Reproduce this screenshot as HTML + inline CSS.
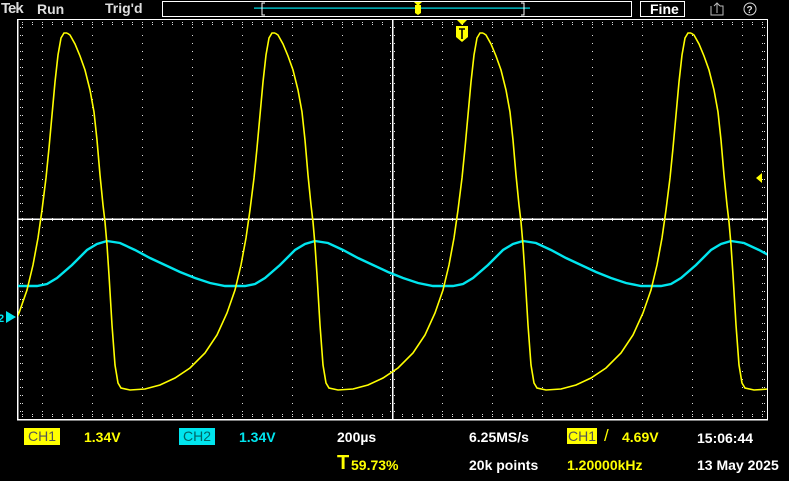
<!DOCTYPE html>
<html><head><meta charset="utf-8"><style>
html,body{margin:0;padding:0;background:#000;width:789px;height:481px;overflow:hidden}
body{position:relative;font-family:"Liberation Sans",sans-serif;font-weight:bold;font-size:13px}
.t{position:absolute;white-space:nowrap}
.w{color:#fff}.y{color:#ffff00}.c{color:#00e5ee}
</style></head><body>
<svg width="789" height="481" style="position:absolute;left:0;top:0">
<defs>
<pattern id="hrow" x="2" y="0" width="10" height="2" patternUnits="userSpaceOnUse"><rect x="0" y="0" width="1" height="1" fill="#ddd"/></pattern>
<pattern id="vcol" x="0" y="3" width="2" height="8" patternUnits="userSpaceOnUse"><rect x="0" y="0" width="1" height="1" fill="#ddd"/></pattern>
<clipPath id="gc"><rect x="18" y="20" width="749" height="399"/></clipPath>
<path id="yp" fill="none" stroke="#ffff00" stroke-width="1.6" d="M0,33 L3,35 8,44 13,56 18,70 23,90 27,112 30,140 33,175 36,205 38,222 40,245 42,275 45,325 48,365 51,383 54,388 63,390 78,389 93,385 108,378 123,368 138,353 150,335 160,313 168,290 174,265 179,238 183,210 187,178 190,148 193,115 196,82 199,55 202,38 205,33 208,33"/>
<path id="bp" fill="none" stroke="#00e5ee" stroke-width="2.4" d="M0,241 L13,243 28,250 43,258 58,265 73,272 88,278 103,283 118,286 138,286 148,284 158,278 173,265 188,250 198,244 208,241"/>
</defs>
<g id="grid">
<rect x="18" y="59" width="749" height="1" fill="url(#hrow)"/>
<rect x="18" y="99" width="749" height="1" fill="url(#hrow)"/>
<rect x="18" y="139" width="749" height="1" fill="url(#hrow)"/>
<rect x="18" y="179" width="749" height="1" fill="url(#hrow)"/>
<rect x="18" y="259" width="749" height="1" fill="url(#hrow)"/>
<rect x="18" y="299" width="749" height="1" fill="url(#hrow)"/>
<rect x="18" y="339" width="749" height="1" fill="url(#hrow)"/>
<rect x="18" y="379" width="749" height="1" fill="url(#hrow)"/>
<rect x="42" y="20" width="1" height="399" fill="url(#vcol)"/>
<rect x="92" y="20" width="1" height="399" fill="url(#vcol)"/>
<rect x="142" y="20" width="1" height="399" fill="url(#vcol)"/>
<rect x="192" y="20" width="1" height="399" fill="url(#vcol)"/>
<rect x="242" y="20" width="1" height="399" fill="url(#vcol)"/>
<rect x="292" y="20" width="1" height="399" fill="url(#vcol)"/>
<rect x="342" y="20" width="1" height="399" fill="url(#vcol)"/>
<rect x="442" y="20" width="1" height="399" fill="url(#vcol)"/>
<rect x="492" y="20" width="1" height="399" fill="url(#vcol)"/>
<rect x="542" y="20" width="1" height="399" fill="url(#vcol)"/>
<rect x="592" y="20" width="1" height="399" fill="url(#vcol)"/>
<rect x="642" y="20" width="1" height="399" fill="url(#vcol)"/>
<rect x="692" y="20" width="1" height="399" fill="url(#vcol)"/>
<rect x="742" y="20" width="1" height="399" fill="url(#vcol)"/>
<rect x="20" y="20" width="3" height="399" fill="url(#vcol)"/>
<rect x="762" y="20" width="3" height="399" fill="url(#vcol)"/>
<rect x="18" y="22" width="749" height="3" fill="url(#hrow)"/>
<rect x="18" y="414" width="749" height="3" fill="url(#hrow)"/>
<rect x="390" y="20" width="5" height="399" fill="url(#vcol)"/>
<rect x="18" y="217" width="749" height="5" fill="url(#hrow)"/>
<rect x="17" y="19" width="751" height="1" fill="#fff"/>
<rect x="17" y="419" width="751" height="1.5" fill="#fff"/>
<rect x="17" y="19" width="1.5" height="401" fill="#fff"/>
<rect x="767" y="19" width="1" height="401" fill="#fff"/>
<rect x="392" y="19" width="1.5" height="401" fill="#fff"/>
<rect x="17" y="218.5" width="751" height="1.5" fill="#fff"/>
</g>
<g clip-path="url(#gc)">
<use href="#bp" x="-101"/><use href="#bp" x="107"/><use href="#bp" x="315"/><use href="#bp" x="523"/><use href="#bp" x="731"/>
<use href="#yp" x="-141"/><use href="#yp" x="67"/><use href="#yp" x="275"/><use href="#yp" x="483"/><use href="#yp" x="691"/>
</g>
<polygon points="6,311 16,317 6,323" fill="#00e5ee"/>
<text x="-2" y="322" fill="#00e5ee" font-size="11" font-family="Liberation Sans">2</text>
<polygon points="756,178 762,173 762,183" fill="#ffff00"/>
<polygon points="457,20 467,20 462,25" fill="#ffff00"/>
<path d="M456,26 H468 V37 L462,42 L456,37 Z" fill="#ffff00"/>
<path d="M459,29 H465 M462,29 V39" stroke="#000" stroke-width="1.6"/>
<rect x="162.5" y="1.5" width="469" height="15" fill="none" stroke="#fff" stroke-width="1"/>
<rect x="254" y="7.5" width="276" height="1.2" fill="#00e5ee"/>
<path d="M265,3 H262 V15 H265" stroke="#fff" fill="none"/>
<path d="M521,3 H524 V15 H521" stroke="#fff" fill="none"/>
<polygon points="414,2 422,2 418,6" fill="#ffff00"/>
<path d="M415,5 H421 V13 L418,15 L415,13 Z" fill="#ffff00"/>
<rect x="640.5" y="1.5" width="44" height="15" fill="none" stroke="#fff"/>
<path d="M711,6 V15 H723 V6 H720" stroke="#bbb" fill="none"/>
<path d="M717,13 V3 M714,6 L717,3 L720,6" stroke="#bbb" fill="none"/>
<circle cx="750" cy="9" r="6" stroke="#ddd" fill="none"/>
<text x="746.5" y="13" fill="#ddd" font-size="10" font-family="Liberation Sans">?</text>
</svg>
<div class="t w" style="left:1px;top:0px;font-size:15px;letter-spacing:-1px;color:#ddd">Tek</div>
<div class="t w" style="left:37px;top:1px;font-size:14px;color:#ddd">Run</div>
<div class="t w" style="left:105px;top:0px;font-size:14px;color:#ddd">Trig'd</div>
<div class="t w" style="left:650px;top:1px;font-size:14px">Fine</div>

<div class="t" style="left:24px;top:428px;width:36px;height:17px;background:#ffff00;color:#555;font-weight:normal;text-align:center;line-height:17px;font-size:14px">CH1</div>
<div class="t y" style="left:84px;top:429px;font-size:14px">1.34V</div>
<div class="t" style="left:179px;top:428px;width:36px;height:17px;background:#00e5ee;color:#066;font-weight:normal;text-align:center;line-height:17px;font-size:14px">CH2</div>
<div class="t c" style="left:239px;top:429px;font-size:14px">1.34V</div>
<div class="t w" style="left:337px;top:429px;font-size:14px">200µs</div>
<div class="t y" style="left:337px;top:452px;font-size:20px">T</div>
<div class="t y" style="left:351px;top:457px;font-size:14px">59.73%</div>
<div class="t w" style="left:469px;top:429px;font-size:14px">6.25MS/s</div>
<div class="t w" style="left:469px;top:457px;font-size:14px">20k points</div>
<div class="t" style="left:567px;top:428px;width:30px;height:16px;background:#ffff00;color:#555;font-weight:normal;text-align:center;line-height:16px;font-size:14px">CH1</div>
<div class="t y" style="left:604px;top:426px;font-weight:normal;font-size:17px">/</div>
<div class="t y" style="left:622px;top:429px;font-size:14px">4.69V</div>
<div class="t y" style="left:567px;top:457px;font-size:14px">1.20000kHz</div>
<div class="t w" style="left:697px;top:430px;font-size:14px">15:06:44</div>
<div class="t w" style="left:697px;top:457px;font-size:14px">13 May 2025</div>
</body></html>
